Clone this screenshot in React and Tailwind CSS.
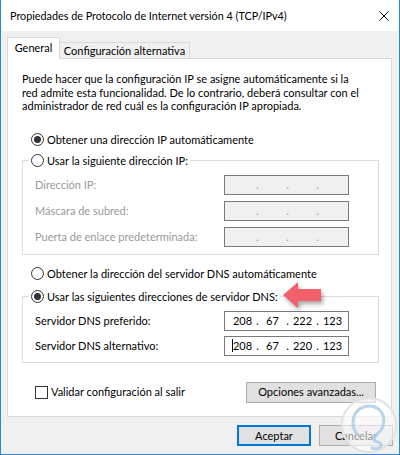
import React from 'react';

function Radio({ checked, children, disabled }) {
  return (
    <div className="flex items-center h-[16px]">
      <span className="w-[13px] h-[13px] rounded-full border border-[#333] bg-white flex items-center justify-center shrink-0">
        {checked && <span className="w-[7px] h-[7px] rounded-full bg-[#333]" />}
      </span>
      <span className={`ml-[3px] whitespace-nowrap ${disabled ? 'text-[#999]' : 'text-black'}`}>{children}</span>
    </div>
  );
}

function IpBox({ value, disabled, cursor }) {
  const parts = value || ['', '', '', ''];
  return (
    <div
      className={`w-[125px] h-[20px] border flex items-center pl-[5px] ${
        disabled ? 'bg-[#f0f0f0] border-[#7a7a7a]' : 'bg-white border-[#7a7a7a]'
      }`}
    >
      {parts.map((p, i) => (
        <React.Fragment key={i}>
          <span className="w-[25px] text-center relative">
            {cursor && i === 0 && <span className="absolute left-[2px] top-[1px] w-px h-[13px] bg-black" />}
            {p}
          </span>
          {i < 3 && <span className={`w-[5px] text-center ${disabled ? 'text-[#999]' : ''}`}>.</span>}
        </React.Fragment>
      ))}
    </div>
  );
}

function Field({ label, children, disabled }) {
  return (
    <div className="flex items-center justify-between pl-[12px] pr-[29px] h-[20px]">
      <span className={disabled ? 'text-[#999]' : 'text-black'}>{label}</span>
      {children}
    </div>
  );
}

export default function App() {
  return (
    <div className="relative w-[400px] h-[455px] bg-[#f0f0f0] border-x border-b border-[#2b87d8] font-['Lato',sans-serif] text-[11px] leading-[16px] text-black overflow-hidden">
      {/* Title bar */}
      <div className="h-[31px] bg-white flex items-center justify-between pl-[9px] pr-[10px]">
        <span className="whitespace-nowrap text-[10.8px]">Propiedades de Protocolo de Internet versión 4 (TCP/IPv4)</span>
        <svg width="10" height="10" viewBox="0 0 10 10">
          <path d="M0.5 0.5 L9.5 9.5 M9.5 0.5 L0.5 9.5" stroke="#000" strokeWidth="1" />
        </svg>
      </div>

      <div className="pt-[7px] pl-[6px] pr-[7px]">
        {/* Tabs */}
        <div className="flex items-end h-[21px] -mb-px relative z-10">
          <div className="w-[53px] h-[22px] bg-white border border-b-0 border-[#d9d9d9] flex items-center justify-center pb-[1px] whitespace-nowrap">
            General
          </div>
          <div className="w-[130px] h-[16px] mb-px bg-[#f0f0f0] border-t border-r border-[#d9d9d9] flex items-center justify-center whitespace-nowrap">
            Configuración alternativa
          </div>
        </div>

        {/* Panel */}
        <div className="h-[359px] bg-white border border-[#d9d9d9] pt-[13px] pl-[14px] pr-[12px]">
          <p className="leading-[13.5px] whitespace-nowrap">
            Puede hacer que la configuración IP se asigne automáticamente si la
            <br />
            red admite esta funcionalidad. De lo contrario, deberá consultar con el
            <br />
            administrador de red cuál es la configuración IP apropiada.
          </p>

          <div className="mt-[19px] pl-[9px]">
            <Radio checked>Obtener una dirección IP automáticamente</Radio>
          </div>

          <fieldset className="mt-[5px] border border-[#dcdcdc] pb-[7px]">
            <legend className="ml-[6px] px-[2px]">
              <Radio>Usar la siguiente dirección IP:</Radio>
            </legend>
            <div className="mt-[6px] flex flex-col gap-[6px]">
              <Field label="Dirección IP:" disabled>
                <IpBox disabled />
              </Field>
              <Field label="Máscara de subred:" disabled>
                <IpBox disabled />
              </Field>
              <Field label="Puerta de enlace predeterminada:" disabled>
                <IpBox disabled />
              </Field>
            </div>
          </fieldset>

          <div className="mt-[11px] pl-[9px]">
            <Radio>Obtener la dirección del servidor DNS automáticamente</Radio>
          </div>

          <fieldset className="mt-[7px] border border-[#dcdcdc] pb-[6px]">
            <legend className="ml-[6px] px-[2px]">
              <Radio checked>Usar las siguientes direcciones de servidor DNS:</Radio>
            </legend>
            <div className="mt-[6px] flex flex-col gap-[5px]">
              <Field label="Servidor DNS preferido:">
                <IpBox value={['208', '67', '222', '123']} />
              </Field>
              <Field label="Servidor DNS alternativo:">
                <IpBox value={['208', '67', '220', '123']} cursor />
              </Field>
            </div>
          </fieldset>

          <div className="mt-[19px] flex items-center justify-between h-[21px] pl-[13px] pr-[3px]">
            <div className="flex items-center">
              <span className="w-[13px] h-[13px] border border-[#333] bg-white" />
              <span className="ml-[3px]">Validar configuración al salir</span>
            </div>
            <button className="w-[130px] h-[21px] bg-[#e1e1e1] border border-[#adadad] flex items-center justify-center">
              Opciones avanzadas...
            </button>
          </div>
        </div>

        {/* Footer */}
        <div className="mt-[8px] flex justify-end gap-[8px]">
          <button className="w-[74px] h-[21px] bg-[#e1e1e1] border-2 border-[#0078d7] flex items-center justify-center">
            Aceptar
          </button>
          <button className="w-[74px] h-[21px] bg-[#e1e1e1] border border-[#adadad] flex items-center justify-center mr-[-1px]">
            Cancelar
          </button>
        </div>
      </div>

      {/* Red arrow annotation */}
      <svg className="absolute left-[280px] top-[280px] drop-shadow-[2px_3px_2px_rgba(0,0,0,0.35)]" width="44" height="30" viewBox="0 0 44 30">
        <path d="M2 15 L17 2 L17 9 L40 9 L40 21 L17 21 L17 28 Z" fill="#f2606b" />
      </svg>

      {/* Watermark */}
      <svg className="absolute left-[338px] top-[396px]" width="60" height="60" viewBox="0 0 60 60">
        <circle cx="30" cy="29" r="27" fill="rgba(255,255,255,0.55)" stroke="#e2e2e2" strokeWidth="2" />
        <path
          d="M20 40 C10 32 12 12 29 10 C46 9 50 30 38 38 L35 43 C34 46 40 45 42 48 C44 51 38 54 33 52"
          fill="none"
          stroke="#a9c9e6"
          strokeWidth="3"
          strokeLinecap="round"
          opacity="0.8"
        />
      </svg>
    </div>
  );
}
